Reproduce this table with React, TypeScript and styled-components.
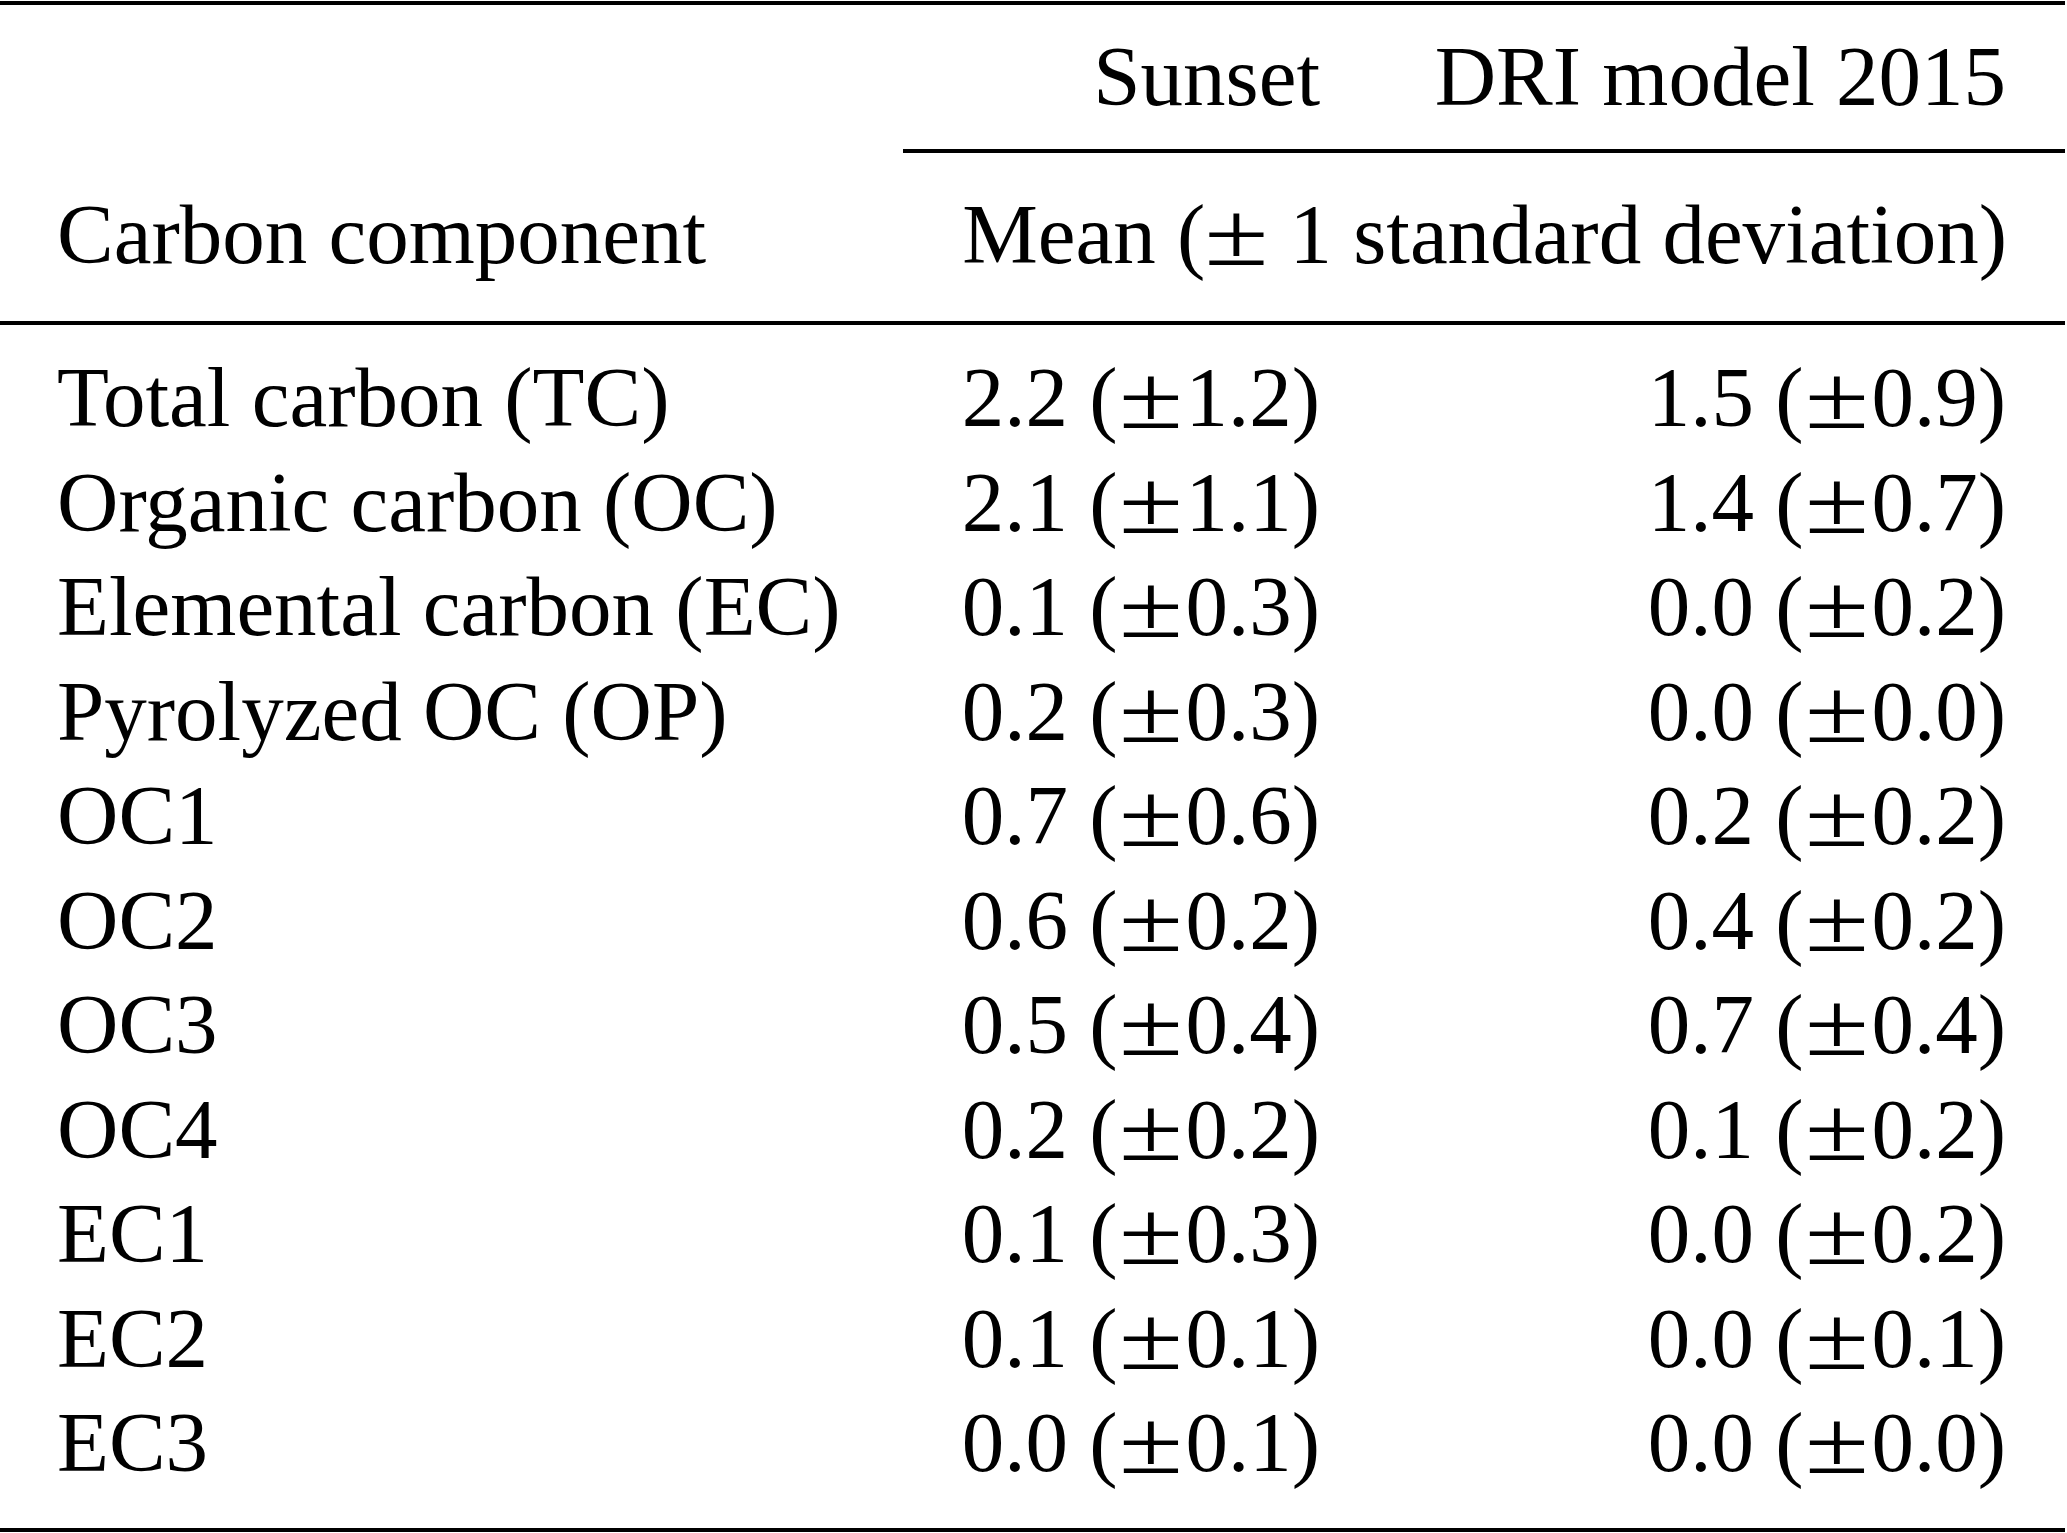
import * as React from "react";
import styled, { createGlobalStyle } from "styled-components";

interface Row {
  name: string,
  sunset: [number, number],
  dri: [number, number]
}

const rows: Row[] = [
  { name: "Total carbon (TC)", sunset: [2.2, 1.2], dri: [1.5, 0.9] },
  { name: "Organic carbon (OC)", sunset: [2.1, 1.1], dri: [1.4, 0.7] },
  { name: "Elemental carbon (EC)", sunset: [0.1, 0.3], dri: [0.0, 0.2] },
  { name: "Pyrolyzed OC (OP)", sunset: [0.2, 0.3], dri: [0.0, 0.0] },
  { name: "OC1", sunset: [0.7, 0.6], dri: [0.2, 0.2] },
  { name: "OC2", sunset: [0.6, 0.2], dri: [0.4, 0.2] },
  { name: "OC3", sunset: [0.5, 0.4], dri: [0.7, 0.4] },
  { name: "OC4", sunset: [0.2, 0.2], dri: [0.1, 0.2] },
  { name: "EC1", sunset: [0.1, 0.3], dri: [0.0, 0.2] },
  { name: "EC2", sunset: [0.1, 0.1], dri: [0.0, 0.1] },
  { name: "EC3", sunset: [0.0, 0.1], dri: [0.0, 0.0] },
];

function Value({ v }: { v: [number, number] }) {
  return (
    <>
      {v[0].toFixed(1)} (<PlusMinus $w="0.8em">±</PlusMinus>{v[1].toFixed(1)})
    </>
  );
}

export default function App() {
  return (
    <>
      <GlobalStyle />
      <Table>
        <colgroup>
          <Col $w={903} />
          <Col $w={475} />
          <Col $w={687} />
        </colgroup>
        <thead>
          <GroupRow>
            <GroupCell />
            <GroupCell $ruled>Sunset</GroupCell>
            <GroupCell $ruled>DRI model 2015</GroupCell>
          </GroupRow>
          <LabelRow>
            <LabelCell $align="left">Carbon component</LabelCell>
            <LabelCell $align="right" colSpan={2}>
              Mean (<PlusMinus $w="0.74em">±</PlusMinus> 1 standard deviation)
            </LabelCell>
          </LabelRow>
        </thead>
        <tbody>
          {rows.map((r) => (
            <BodyRow key={r.name}>
              <NameCell>{r.name}</NameCell>
              <NumCell><Value v={r.sunset} /></NumCell>
              <NumCell><Value v={r.dri} /></NumCell>
            </BodyRow>
          ))}
        </tbody>
      </Table>
    </>
  );
}

const GlobalStyle = createGlobalStyle`
  html, body {
    margin: 0;
    padding: 0;
    background: #ffffff;
    overflow: hidden;
  }
`;

const Table = styled.table`
  width: 2065px;
  margin-top: 1px;
  table-layout: fixed;
  border-collapse: separate;
  border-spacing: 0;
  border-top: 4px solid #000;
  border-bottom: 4px solid #000;
  font-family: "Liberation Serif", "Times New Roman", serif;
  font-size: 85px;
  line-height: 104.5px;
  color: #000;

  td, th {
    padding: 0;
    font-weight: normal;
    white-space: nowrap;
    vertical-align: baseline;
  }
  td:first-child, th:first-child {
    padding-left: 57px;
    text-align: left;
  }
  td:nth-child(2), th:nth-child(2) {
    padding-right: 58px;
    text-align: right;
  }
  td:nth-child(3), th:nth-child(3) {
    padding-right: 59px;
    text-align: right;
  }
`;

const Col = styled.col<{ $w: number }>`
  width: ${(p) => p.$w}px;
`;

const PlusMinus = styled.span<{ $w: string }>`
  display: inline-block;
  width: ${(p) => p.$w};
  text-align: center;
  transform: scale(1.37, 1.06);
`;

const GroupRow = styled.tr``;

const GroupCell = styled.th<{ $ruled?: boolean }>`
  && {
    padding-top: 19px;
    padding-bottom: 20.5px;
    border-bottom: ${(p) => (p.$ruled ? "4px solid #000" : "none")};
  }
`;

const LabelRow = styled.tr``;

const LabelCell = styled.th<{ $align: "left" | "right" }>`
  && {
    padding-top: 29px;
    padding-bottom: 34.5px;
    border-bottom: 4px solid #000;
    text-align: ${(p) => p.$align};
    padding-left: ${(p) => (p.$align === "left" ? "57px" : "58px")};
    padding-right: ${(p) => (p.$align === "left" ? "0" : "60px")};
  }
`;

const BodyRow = styled.tr`
  &:first-child td {
    padding-top: 20px;
  }
  &:last-child td {
    padding-bottom: 33.5px;
  }
`;

const NameCell = styled.td``;

const NumCell = styled.td``;
